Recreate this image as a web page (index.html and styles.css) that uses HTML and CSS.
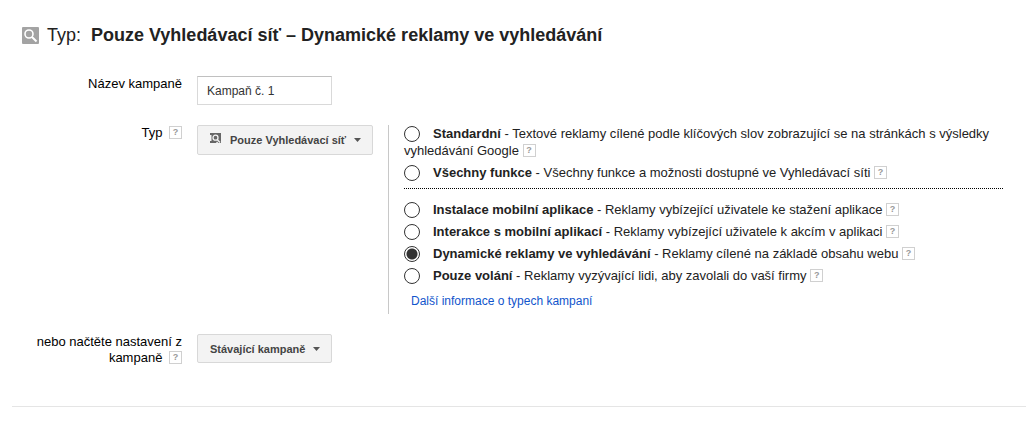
FILE: index.html
```html
<!DOCTYPE html>
<html lang="cs">
<head>
<meta charset="utf-8">
<title>Nastavení kampaně</title>
<link rel="stylesheet" href="styles.css">
</head>
<body>
<main class="page">
  <h1 class="heading">
    <svg class="heading-icon" viewBox="0 0 17 17" aria-hidden="true">
      <rect width="17" height="17" rx="1" fill="#a3a3a3"/>
      <circle cx="7" cy="7" r="4" fill="none" stroke="#fff" stroke-width="1.6"/>
      <path d="M10 10l4.500 4.500" stroke="#fff" stroke-width="2"/>
    </svg>
    <span class="heading-label">Typ:</span>
    <span class="heading-value">Pouze Vyhledávací síť – Dynamické reklamy ve vyhledávání</span>
  </h1>

  <form class="form">
    <div class="form-row">
      <label class="form-label" for="name">Název kampaně</label>
      <div class="form-content"><input class="text-input" id="name" type="text" value="Kampaň č. 1"></div>
    </div>

    <div class="form-row">
      <div class="form-label"><label for="type">Typ</label> <button class="help help-spaced" type="button">?</button></div>
      <div class="form-content">
        <div class="dropdown">
          <svg class="dropdown-icon" viewBox="0 0 11 10" aria-hidden="true">
            <path d="M0 0h11v10H8.500L7 8.500 6 10H0V8h1.500V2H0z" fill="#666"/>
            <circle cx="5.500" cy="4.700" r="2.500" fill="#666" stroke="#f3f3f3" stroke-width="1.300"/>
            <path d="M7.200 6.500L10 9.500" stroke="#f3f3f3" stroke-width="1.400"/>
          </svg>
          <select class="select select-with-icon" id="type"><option>Pouze Vyhledávací síť</option></select>
          <svg class="caret" viewBox="0 0 7 4" aria-hidden="true"><path d="M0 0h7L3.500 4z" fill="#555"/></svg>
        </div>
        <div class="subtypes" role="radiogroup" aria-label="Typ kampaně">
          <div class="options options-main">
            <div class="option"><input class="radio" type="radio" name="subtype" id="s1"><label for="s1"><b>Standardní</b> - Textové reklamy cílené podle klíčových slov zobrazující se na stránkách s výsledky vyhledávání Google</label> <button class="help" type="button">?</button></div>
            <div class="option"><input class="radio" type="radio" name="subtype" id="s2"><label for="s2"><b>Všechny funkce</b> - Všechny funkce a možnosti dostupné ve Vyhledávací síti</label> <button class="help" type="button">?</button></div>
          </div>
          <div class="options">
            <div class="option"><input class="radio" type="radio" name="subtype" id="s3"><label for="s3"><b>Instalace mobilní aplikace</b> - Reklamy vybízející uživatele ke stažení aplikace</label> <button class="help" type="button">?</button></div>
            <div class="option"><input class="radio" type="radio" name="subtype" id="s4"><label for="s4"><b>Interakce s mobilní aplikací</b> - Reklamy vybízející uživatele k akcím v aplikaci</label> <button class="help" type="button">?</button></div>
            <div class="option"><input class="radio" type="radio" name="subtype" id="s5" checked><label for="s5"><b>Dynamické reklamy ve vyhledávání</b> - Reklamy cílené na základě obsahu webu</label> <button class="help" type="button">?</button></div>
            <div class="option"><input class="radio" type="radio" name="subtype" id="s6"><label for="s6"><b>Pouze volání</b> - Reklamy vyzývající lidi, aby zavolali do vaší firmy</label> <button class="help" type="button">?</button></div>
          </div>
          <a class="more-link" href="#">Další informace o typech kampaní</a>
        </div>
      </div>
    </div>

    <div class="form-row">
      <div class="form-label"><label for="load">nebo načtěte nastavení z kampaně</label> <button class="help help-spaced" type="button">?</button></div>
      <div class="form-content">
        <div class="dropdown">
          <select class="select" id="load"><option>Stávající kampaně</option></select>
          <svg class="caret" viewBox="0 0 7 4" aria-hidden="true"><path d="M0 0h7L3.500 4z" fill="#555"/></svg>
        </div>
      </div>
    </div>
  </form>
  <hr class="divider">
</main>
</body>
</html>
```
FILE: styles.css
```css
* { box-sizing: border-box; }

body {
  margin: 0;
  background: #fff;
  color: #222;
  font: 13px/16px "Liberation Sans", Arial, sans-serif;
}

.page { padding: 24px 0 24px 12px; }

.heading {
  display: flex;
  align-items: center;
  margin: 0 0 30px;
  padding-left: 10px;
  font-size: 18px;
  line-height: 22px;
  font-weight: 400;
}
.heading-icon { width: 17px; height: 17px; margin-right: 8px; }
.heading-label { margin-right: 10px; }
.heading-value { font-weight: 700; }

.form {
  display: flex;
  flex-direction: column;
  gap: 20px;
  padding-right: 23px;
}
.form-row {
  display: grid;
  grid-template-columns: 170px minmax(0, 1fr);
  column-gap: 15px;
  align-items: start;
}
.form-label { color: #000; text-align: right; padding-left: 20px; }
.form-content { display: flex; align-items: flex-start; gap: 15px; }

.text-input {
  width: 135px;
  height: 29px;
  padding: 0 9px;
  border: 1px solid #d9d9d9;
  border-top-color: #c0c0c0;
  background: #fff;
  color: #333;
  font: 12px "Liberation Sans", Arial, sans-serif;
}

.help {
  width: 13px;
  height: 13px;
  padding: 0;
  border: 1px solid #d0d0d0;
  background: #fff;
  color: #999;
  font: 700 9px/11px "Liberation Sans", Arial, sans-serif;
  text-align: center;
  vertical-align: 2px;
}
.help-spaced { margin-left: 3px; }

.dropdown { position: relative; flex: none; }
.select {
  appearance: none;
  display: block;
  height: 29px;
  padding: 0 25px 0 12px;
  border: 1px solid #d8d8d8;
  border-radius: 2px;
  background: #f3f3f3;
  color: #444;
  font: 700 11px "Liberation Sans", Arial, sans-serif;
}
.select-with-icon { height: 30px; padding-left: 32px; }
.dropdown-icon {
  position: absolute;
  left: 13px;
  top: 8px;
  width: 11px;
  height: 10px;
}
.caret {
  position: absolute;
  right: 12px;
  top: 13px;
  width: 7px;
  height: 4px;
  pointer-events: none;
}

.subtypes {
  flex: 1;
  min-width: 0;
  padding: 0 0 5px 15px;
  border-left: 1px solid #c8c8c8;
}
.options-main {
  margin-bottom: 12px;
  padding-bottom: 2px;
  border-bottom: 1px dotted #000;
}
.option { line-height: 17px; padding-bottom: 5px; }
.radio {
  appearance: none;
  width: 16px;
  height: 16px;
  margin: 0 13px 0 0;
  border: 1px solid #333;
  border-radius: 50%;
  background: #fff;
  vertical-align: -4px;
}
.radio:checked { background: radial-gradient(circle, #333 5px, #fff 6px); }

.more-link {
  display: block;
  padding: 4px 0 0 7px;
  color: #15c;
  font-size: 12px;
  text-decoration: none;
}

.divider { margin: 40px 0 0; border: 0; border-top: 1px solid #e5e5e5; }
```
